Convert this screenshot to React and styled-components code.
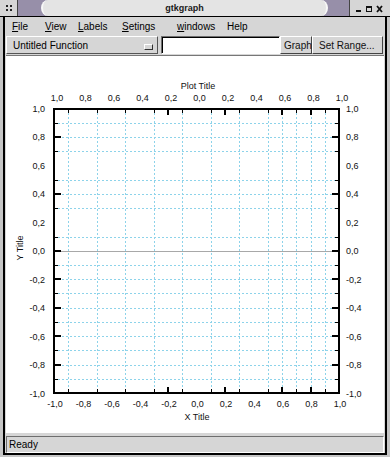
import React from 'react';
import styled, { createGlobalStyle } from 'styled-components';

const Global = createGlobalStyle`
  html, body { margin: 0; padding: 0; background: #c6c6c6; }
  body { font-family: "Liberation Sans", Arial, sans-serif; }
  * { box-sizing: border-box; }
`;

const Window = styled.div`
  width: 390px;
  height: 457px;
  display: flex;
  flex-direction: column;
  background: #c6c6c6;
`;

const TitleBar = styled.div`
  height: 17px;
  display: flex;
  border-bottom: 1px solid #000;
  background: #978fa9;
`;

const TitleIconBox = styled.div`
  width: 18px;
  background: #d6d6d6;
  border-right: 1px solid #444;
  display: flex;
  align-items: center;
  justify-content: center;
`;

const TitleMiddle = styled.div`
  flex: 1;
  display: flex;
  padding: 0 21px 0 23px;
`;

const TitleCenter = styled.div`
  flex: 1;
  background: #e4e4e4;
  border-radius: 7px / 50%;
  border-left: 2px solid #f8f8f8;
  border-right: 2px solid #f8f8f8;
  display: flex;
  align-items: center;
  justify-content: center;
  font-size: 9px;
  font-weight: bold;
  color: #1a1a1a;
`;

const TitleControls = styled.div`
  width: 41px;
  background: #d6d6d6;
  border-left: 1px solid #444;
  display: flex;
  align-items: center;
  justify-content: center;
`;

const Body = styled.div`
  flex: 1;
  min-height: 0;
  display: flex;
  flex-direction: column;
  margin: 0 3px 2px;
  border-left: 2px solid #000;
  border-right: 2px solid #000;
  border-bottom: 2px solid #000;
  background: #d6d6d6;
`;

const MenuBar = styled.div`
  height: 19px;
  display: flex;
  align-items: center;
  padding-left: 7px;
  font-size: 10px;
  color: #000;
`;

const MenuItem = styled.div`
  width: ${p => p.$w}px;
  flex: none;
  span { text-decoration: underline; }
`;

const Toolbar = styled.div`
  height: 19px;
  display: flex;
  align-items: flex-start;
  padding-left: 1px;
  font-size: 10px;
`;

const OptionMenu = styled.div`
  width: 152px;
  height: 18px;
  display: flex;
  align-items: center;
  justify-content: space-between;
  padding: 0 4px 0 6px;
  border-top: 1px solid #fff;
  border-left: 1px solid #fff;
  border-right: 1px solid #555;
  border-bottom: 1px solid #555;
`;

const Indicator = styled.div`
  width: 9px;
  height: 6px;
  margin-top: 4px;
  border-top: 1px solid #fff;
  border-left: 1px solid #fff;
  border-right: 1px solid #333;
  border-bottom: 1px solid #333;
  background: #d6d6d6;
`;

const Entry = styled.div`
  width: 119px;
  height: 18px;
  margin-left: 3px;
  background: #fff;
  border-top: 1px solid #6e6e6e;
  border-left: 1px solid #6e6e6e;
  border-right: 1px solid #fff;
  border-bottom: 1px solid #fff;
  box-shadow: inset 1px 1px 0 #000;
`;

const Button = styled.div`
  width: ${p => p.$w}px;
  height: 18px;
  display: flex;
  align-items: center;
  padding-left: ${p => p.$pad}px;
  border-top: 1px solid #fff;
  border-left: 1px solid #fff;
  border-right: 1px solid #444;
  border-bottom: 1px solid #444;
  color: #111;
`;

const Canvas = styled.div`
  height: 378px;
  margin: 0 1px;
  background: #fff;
  border-top: 1px solid #777;
  svg { display: block; }
`;

const StatusArea = styled.div`
  flex: 1;
  padding: 3px 1px 0;
  display: flex;
`;

const StatusFrame = styled.div`
  flex: 1;
  display: flex;
  align-items: center;
  padding-left: 2px;
  font-size: 10px;
  border-top: 1px solid #6e6e6e;
  border-left: 1px solid #6e6e6e;
  border-right: 1px solid #fff;
  border-bottom: 1px solid #fff;
`;

const X0 = 54, X1 = 339, Y0 = 108.5, Y1 = 393;
const xs = t => X0 + (t + 10) / 20 * (X1 - X0);
const ys = t => Y0 + (10 - t) / 20 * (Y1 - Y0);
const px = v => Math.round(v) + 0.5;

// positions (in tenths) where the plot draws grid lines and ticks
const vGrid = [-9, -7, -5, -3, -1, 1, 3, 5, 6, 7, 8, 9];
const vMinor = [-9, -7, -5, -3, -1, 1, 3, 5, 7, 9];
const vMajor = [-2, 2, 6, 8];
const hGrid = [-9, -8, -7, -6, -5, -4, -3, -2, -1, 1, 3, 4, 5, 7, 8, 9];
const hMinor = [-9, -7, -5, -3, -1, 1, 3, 5, 7, 9];
const hMajor = [-8, -6, -4, -2, 0, 4, 8];
const labels = [-10, -8, -6, -4, -2, 0, 2, 4, 6, 8, 10];
const fmt = (t, abs) => {
  const v = abs ? Math.abs(t) : t;
  return (v < 0 ? '-' : '') + (Math.abs(v) / 10).toFixed(1).replace('.', ',');
};

const GRID = '#8dd3ea';
const FONT = '"Liberation Sans", Arial, sans-serif';

function Plot() {
  return (
    <svg width="378" height="377" viewBox="6 56 378 377" fontFamily={FONT} fontSize="9" fill="#111">
      <g shapeRendering="crispEdges">
        {vGrid.map(t => (
          <line key={'vg' + t} x1={px(xs(t))} x2={px(xs(t))} y1={Y0} y2={Y1} stroke={GRID} strokeDasharray="2 2" />
        ))}
        {hGrid.map(t => (
          <line key={'hg' + t} y1={px(ys(t))} y2={px(ys(t))} x1={X0} x2={X1} stroke={GRID} strokeDasharray="2 2" />
        ))}
        <line x1={X0} x2={X1} y1={px(ys(0))} y2={px(ys(0))} stroke="#a8a8a8" />
        {vMinor.map(t => (
          <g key={'vt' + t} stroke="#000">
            <line x1={px(xs(t))} x2={px(xs(t))} y1={Y0} y2={Y0 + 4} />
            <line x1={px(xs(t))} x2={px(xs(t))} y1={Y1} y2={Y1 - 4} />
          </g>
        ))}
        {vMajor.map(t => (
          <g key={'vm' + t} stroke="#000" strokeWidth="2">
            <line x1={Math.round(xs(t))} x2={Math.round(xs(t))} y1={Y0} y2={Y0 + 6} />
            <line x1={Math.round(xs(t))} x2={Math.round(xs(t))} y1={Y1} y2={Y1 - 6} />
          </g>
        ))}
        {hMinor.map(t => (
          <g key={'ht' + t} stroke="#000">
            <line y1={px(ys(t))} y2={px(ys(t))} x1={X0} x2={X0 + 4} />
            <line y1={px(ys(t))} y2={px(ys(t))} x1={X1} x2={X1 - 4} />
          </g>
        ))}
        {hMajor.map(t => (
          <g key={'hm' + t} stroke="#000" strokeWidth="2">
            <line y1={Math.round(ys(t))} y2={Math.round(ys(t))} x1={X0} x2={X0 + 7} />
            <line y1={Math.round(ys(t))} y2={Math.round(ys(t))} x1={X1} x2={X1 - 7} />
          </g>
        ))}
        <rect x={X0} y={Y0} width={X1 - X0} height={Y1 - Y0} fill="none" stroke="#000" strokeWidth="2" />
      </g>
      {labels.map(t => (
        <text key={'tl' + t} x={xs(t) + 3} y="101" textAnchor="middle">{fmt(t, true)}</text>
      ))}
      {labels.map(t => (
        <text key={'bl' + t} x={xs(t) + 1} y="407" textAnchor="middle">{fmt(t, false)}</text>
      ))}
      {labels.map(t => (
        <text key={'ll' + t} x="45" y={ys(t) + 3.5} textAnchor="end">{fmt(t, false)}</text>
      ))}
      {labels.map(t => (
        <text key={'rl' + t} x="346" y={ys(t) + 3.5} textAnchor="start">{fmt(t, false)}</text>
      ))}
      <text x="198" y="89" textAnchor="middle">Plot Title</text>
      <text x="197" y="420" textAnchor="middle">X Title</text>
      <text x="0" y="0" textAnchor="middle" transform="translate(23 248) rotate(-90)">Y Title</text>
    </svg>
  );
}

function WinIcon() {
  return (
    <svg width="6" height="6" viewBox="0 0 6 6">
      <rect x="0" y="0" width="2" height="2" fill="#222" />
      <rect x="4" y="0" width="2" height="2" fill="#222" />
      <rect x="0" y="4" width="2" height="2" fill="#222" />
      <rect x="4" y="4" width="2" height="2" fill="#222" />
    </svg>
  );
}

function WinControls() {
  return (
    <svg width="30" height="10" viewBox="0 0 30 10">
      <rect x="1" y="7" width="5" height="2" fill="#111" />
      <rect x="11.5" y="3.5" width="5" height="5" fill="none" stroke="#111" />
      <rect x="11" y="3" width="6" height="2" fill="#111" />
      <path d="M22 3 L27 9 M27 3 L22 9" stroke="#111" strokeWidth="1.8" />
    </svg>
  );
}

export default function App() {
  return (
    <>
      <Global />
      <Window>
        <TitleBar>
          <TitleIconBox><WinIcon /></TitleIconBox>
          <TitleMiddle>
            <TitleCenter>gtkgraph</TitleCenter>
          </TitleMiddle>
          <TitleControls><WinControls /></TitleControls>
        </TitleBar>
        <Body>
          <MenuBar>
            <MenuItem $w={33}><span>F</span>ile</MenuItem>
            <MenuItem $w={33}><span>V</span>iew</MenuItem>
            <MenuItem $w={44}><span>L</span>abels</MenuItem>
            <MenuItem $w={55}><span>S</span>etings</MenuItem>
            <MenuItem $w={50}><span>w</span>indows</MenuItem>
            <MenuItem $w={30}>Help</MenuItem>
          </MenuBar>
          <Toolbar>
            <OptionMenu>
              <span>Untitled Function</span>
              <Indicator />
            </OptionMenu>
            <Entry />
            <Button $w={32} $pad={3}>Graph</Button>
            <Button $w={71} $pad={6}>Set Range...</Button>
          </Toolbar>
          <Canvas><Plot /></Canvas>
          <StatusArea>
            <StatusFrame>Ready</StatusFrame>
          </StatusArea>
        </Body>
      </Window>
    </>
  );
}
